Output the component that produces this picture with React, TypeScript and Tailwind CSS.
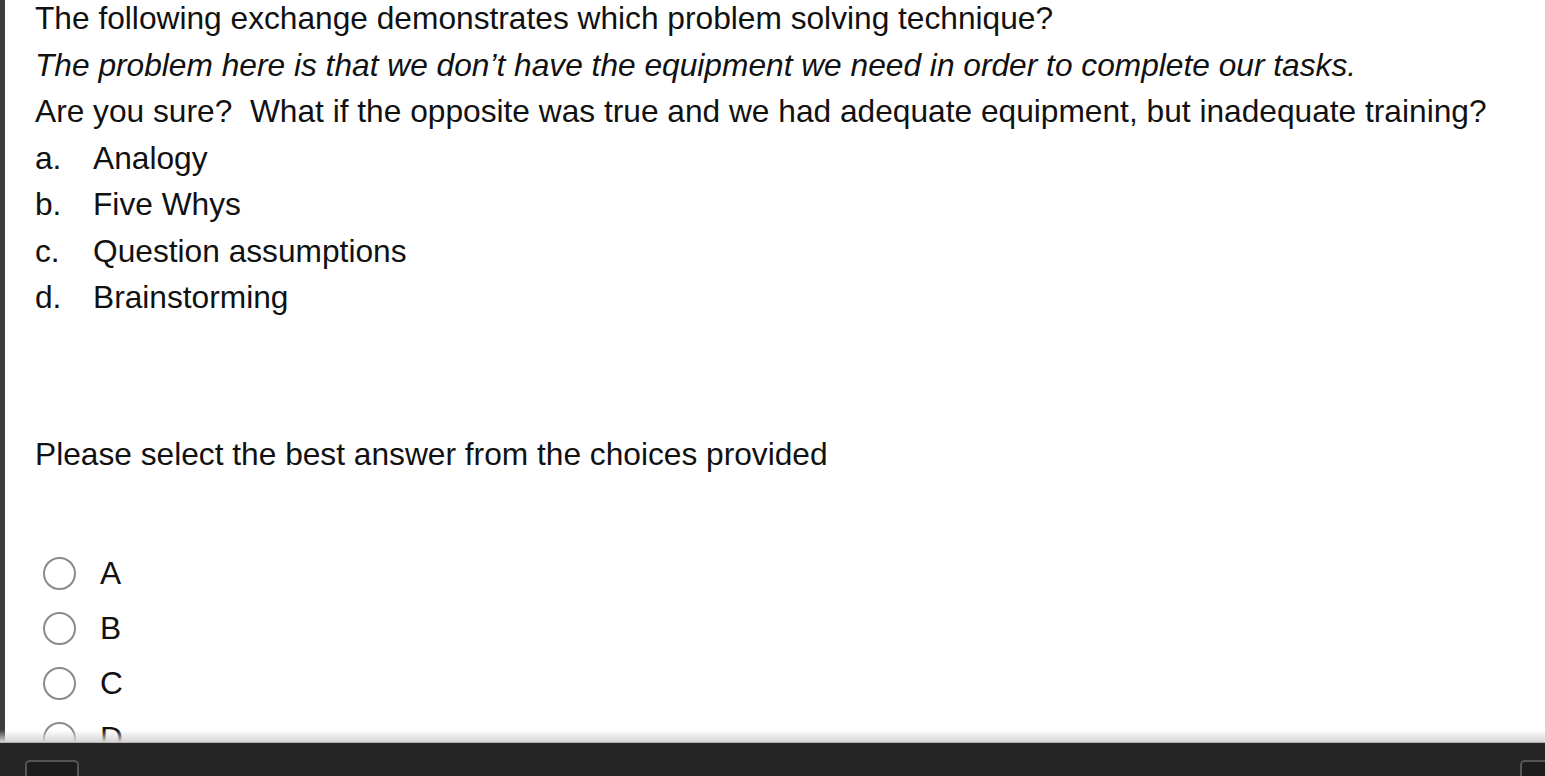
export default function App() {
    const choices = [
        ["a.", "Analogy"],
        ["b.", "Five Whys"],
        ["c.", "Question assumptions"],
        ["d.", "Brainstorming"],
    ]
    const radios = ["A", "B", "C", "D"]

    return (
        <div
            className="relative h-[776px] w-[1545px] overflow-hidden bg-white text-[#111]"
            style={{ fontFamily: '"Liberation Sans", Arial, sans-serif' }}
        >
            <div className="flex h-full">
                <div className="w-[5px] shrink-0 bg-[#3d3d3d]" />
                <div className="flex-1 pl-[30px] text-[31.7px] leading-[46.5px]">
                    <div className="-mt-[5px]">The following exchange demonstrates which problem solving technique?</div>
                    <div className="italic">The problem here is that we don’t have the equipment we need in order to complete our tasks.</div>
                    <div>Are you sure?&nbsp; What if the opposite was true and we had adequate equipment, but inadequate training?</div>
                    {choices.map(([l, t]) => (
                        <div key={l} className="flex">
                            <span className="w-[58px]">{l}</span>
                            <span>{t}</span>
                        </div>
                    ))}
                    <div className="mt-[110px]">Please select the best answer from the choices provided</div>
                    <div className="mt-[80px] flex flex-col gap-[22px] pl-[8px]">
                        {radios.map((r) => (
                            <label key={r} className="flex items-center gap-[24px] leading-[33px]">
                                <span className="h-[33px] w-[33px] shrink-0 rounded-full border-[2.5px] border-[#8a8a8a] bg-white" />
                                <span>{r}</span>
                            </label>
                        ))}
                    </div>
                </div>
            </div>

            {/* bottom toolbar over the page */}
            <div className="absolute bottom-0 left-0 right-0 h-[46px]">
                <div className="h-[12px] bg-gradient-to-b from-white/0 to-[#d6d6d6]" />
                <div className="relative h-[34px] border-t border-[#b0b0b0] bg-[#262626]">
                    <div className="absolute left-[25px] top-[17px] h-[30px] w-[54px] rounded-[5px] border-2 border-[#555] bg-[#1c1c1c]" />
                    <div className="absolute left-[1520px] top-[17px] h-[30px] w-[54px] rounded-[5px] border-2 border-[#555] bg-[#1c1c1c]" />
                </div>
            </div>
        </div>
    )
}
